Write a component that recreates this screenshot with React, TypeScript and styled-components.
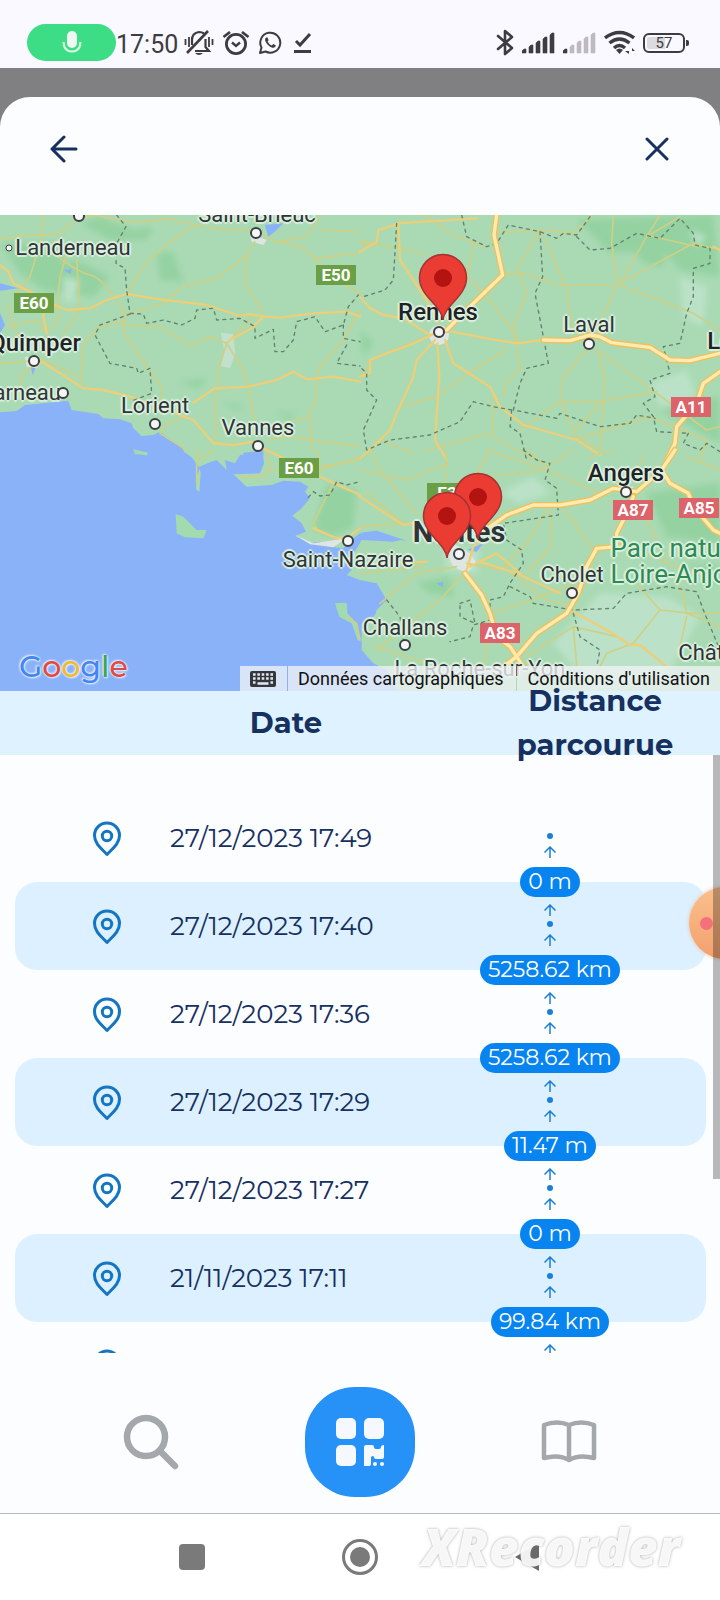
import React from "react";
import styled, { createGlobalStyle, css } from "styled-components";

const GlobalStyle = createGlobalStyle`
  *, *::before, *::after { box-sizing: border-box; }
  body { margin: 0; background: #fcfdff; }
  button { font: inherit; border: 0; padding: 0; background: none; cursor: pointer; }
  svg { display: block; }
`;

const navy = "#16305f";
const blue = "#0784f0";
const pale = "#dcf0ff";
const brandFont = `Montserrat, Inter, sans-serif`;
const systemFont = `Roboto, sans-serif`;

/* ---------- page frame ---------- */

const Page = styled.div`
  display: flex;
  flex-direction: column;
  min-height: 100vh;
  background: #808082;
  overflow: hidden;
`;

const StatusBar = styled.header`
  display: flex;
  align-items: flex-end;
  justify-content: space-between;
  height: 68px;
  padding: 0 31px 7px 27px;
  background: #faf9ff;
  color: #3d3c42;
  font-family: ${systemFont};
`;

const StatusGroup = styled.div<{ $gap: number }>`
  display: flex;
  align-items: center;
  height: 37px;
  gap: ${(p) => p.$gap}px;
`;

const MicPill = styled.span`
  display: flex;
  align-items: center;
  justify-content: center;
  width: 89px;
  height: 37px;
  border-radius: 19px;
  background: #3ddd86;
`;

const Clock = styled.time`
  margin: 4px 6px 0 0;
  font-size: 25px;
  line-height: 30px;
`;

const Battery = styled.span`
  position: relative;
  display: flex;
  align-items: center;
  justify-content: center;
  width: 42px;
  height: 20px;
  margin-right: 4px;
  border: 2px solid #3d3c42;
  border-radius: 6px;
  background: linear-gradient(90deg, #dcdbe0 52%, transparent 52%);
  background-clip: content-box;
  padding: 2px;
  font-size: 15px;
  line-height: 16px;

  &::after {
    content: "";
    position: absolute;
    right: -6px;
    top: 5px;
    width: 3px;
    height: 6px;
    border-radius: 0 2px 2px 0;
    background: #3d3c42;
  }
`;

const Sheet = styled.main`
  display: flex;
  flex-direction: column;
  flex: 1;
  margin-top: 29px;
  border-radius: 30px 30px 0 0;
  background: #fcfdff;
  overflow: hidden;
`;

const SheetHeader = styled.div`
  display: flex;
  align-items: center;
  justify-content: space-between;
  height: 118px;
  padding: 0 43px 14px 44px;
`;

const IconButton = styled.button`
  display: flex;
  align-items: center;
  justify-content: center;
  width: 40px;
  height: 40px;
  color: ${navy};
`;

/* ---------- map ---------- */

const MapFrame = styled.section`
  position: relative;
  aspect-ratio: 720 / 476;
  overflow: hidden;
  font-family: ${systemFont};
`;

const Terrain = styled.svg`
  width: 100%;
  height: 100%;
`;

type Spot = { $x: number; $y: number };

const spot = css<Spot>`
  position: absolute;
  left: ${(p) => (p.$x / 720) * 100}%;
  top: ${(p) => (p.$y / 476) * 100}%;
`;

const Place = styled.span<Spot & { $kind?: "city" | "park" }>`
  ${spot}
  transform: translate(-50%, -50%);
  font-size: 22px;
  line-height: 26px;
  white-space: nowrap;
  text-align: left;
  color: #2f3437;
  text-shadow: 0 0 2px #e6f5e6, 2px 0 1px #dcf0df, -2px 0 1px #dcf0df,
    0 2px 1px #dcf0df, 0 -2px 1px #dcf0df;
  ${(p) =>
    p.$kind === "city" &&
    css`
      font-size: 24px;
      font-weight: 500;
      color: #1f2326;
    `}
  ${(p) =>
    p.$kind === "park" &&
    css`
      font-size: 26px;
      color: #2d8a55;
    `}
`;

const BigPlace = styled(Place)`
  font-size: 29px;
  font-weight: 700;
`;

const Shield = styled.span<Spot & { $red?: boolean }>`
  ${spot}
  transform: translate(-50%, -50%);
  width: 40px;
  height: 20px;
  background: ${(p) => (p.$red ? "#dd636b" : "#6b9f45")};
  color: #fff;
  font-size: 17px;
  font-weight: 700;
  line-height: 20px;
  text-align: center;
`;

const TownDot = styled.i<Spot & { $small?: boolean }>`
  ${spot}
  transform: translate(-50%, -50%);
  width: ${(p) => (p.$small ? 7 : 12)}px;
  height: ${(p) => (p.$small ? 7 : 12)}px;
  border: ${(p) => (p.$small ? 1 : 2)}px solid #3a3f42;
  border-radius: 50%;
  background: #f6f6f6;
`;

const Marker = styled.svg<Spot>`
  ${spot}
  transform: translate(-50%, -100%);
  width: 50px;
  height: 70px;
`;

const GoogleLink = styled.a`
  position: absolute;
  left: 19px;
  bottom: 4px;
  font-family: Montserrat, sans-serif;
  font-size: 30px;
  font-weight: 500;
  line-height: 40px;
  text-decoration: none;
  text-shadow: 0 0 2px #fff, 1px 1px 2px #dfe9fb, -1px -1px 2px #dfe9fb;
`;

const Letter = styled.span<{ $color: string }>`
  color: ${(p) => p.$color};
`;

const MapFooter = styled.div`
  position: absolute;
  right: 0;
  bottom: 0;
  display: flex;
  gap: 1px;
  height: 25px;
  color: #111;
  font-size: 18px;
  line-height: 25px;
`;

const footerItem = css`
  display: flex;
  align-items: center;
  height: 25px;
  background: rgba(240, 242, 245, 0.78);
  color: inherit;
  white-space: nowrap;
`;

const KeyboardButton = styled.button`
  ${footerItem}
  justify-content: center;
  width: 47px;
`;

const FooterButton = styled.button`
  ${footerItem}
  padding: 0 12px 0 10px;
`;

const FooterLink = styled.a`
  ${footerItem}
  padding: 0 10px 0 11px;
  text-decoration: none;
`;

/* ---------- history table ---------- */

const HistoryArea = styled.section`
  position: relative;
  flex: 1 1 0;
  min-height: 400px;
  display: flex;
  flex-direction: column;
  color: ${navy};
  font-family: ${brandFont};
`;

const History = styled.table`
  display: flex;
  flex-direction: column;
  flex: 1 1 0;
  min-height: 0;
`;

const HistoryHead = styled.thead`
  display: block;
  background: #dff2ff;
`;

const HeadRow = styled.tr`
  display: grid;
  grid-template-columns: 102px 1fr 250px;
  grid-template-rows: 64px;
  align-items: center;
`;

const HeadCell = styled.th`
  position: relative;
  z-index: 1;
  padding: 0;
  font-size: 29px;
  font-weight: 700;
  line-height: 44px;
  text-align: center;
`;

const HistoryBody = styled.tbody`
  display: block;
  flex: 1 1 0;
  min-height: 0;
  padding: 39px 14px 0 15px;
  overflow-y: auto;
  scrollbar-width: none;
`;

const Row = styled.tr`
  display: grid;
  grid-template-columns: 155px 1fr 312px;
  grid-template-rows: 88px;
  border-radius: 22px;

  &:nth-child(even) {
    background: ${pale};
  }
`;

const PinCell = styled.td`
  padding: 26px 0 0 77px;
`;

const DateCell = styled.td`
  align-self: center;
  padding: 0;
  font-size: 26px;
  line-height: 30px;
  white-space: nowrap;
`;

const TrackCell = styled.td`
  position: relative;
  z-index: 1;
  display: flex;
  flex-direction: column;
  align-items: center;
  padding: 22px 0 0;
  color: #1a7fd6;
`;

const TrackArrow = styled.svg<{ $hidden?: boolean }>`
  flex: none;
  width: 12px;
  height: 12px;
  visibility: ${(p) => (p.$hidden ? "hidden" : "visible")};
`;

const TrackDot = styled.i`
  flex: none;
  width: 6px;
  height: 6px;
  margin: 5px 0 7px;
  border-radius: 50%;
  background: currentColor;
`;

const Distance = styled.span`
  flex: none;
  height: 30px;
  margin-top: 9px;
  padding: 0 8px;
  border-radius: 15px;
  background: ${blue};
  color: #fff;
  font-size: 22px;
  line-height: 30px;
  white-space: nowrap;
`;

const ScrollThumb = styled.div`
  position: absolute;
  z-index: 3;
  top: 64px;
  right: 0;
  width: 7px;
  height: 64%;
  background: rgba(0, 0, 0, 0.27);
`;

const RecorderBubble = styled.button`
  position: absolute;
  z-index: 2;
  top: 196px;
  right: -41px;
  width: 72px;
  height: 72px;
  border-radius: 50%;
  background: linear-gradient(180deg, #fac08c, #f2a06e);
  box-shadow: 0 0 4px #ecc4a8;

  &::after {
    content: "";
    position: absolute;
    left: 11px;
    top: 30px;
    width: 13px;
    height: 13px;
    border-radius: 50%;
    background: #f4707a;
  }
`;

/* ---------- bottom bars ---------- */

const TabBar = styled.nav`
  display: grid;
  grid-template-columns: repeat(3, 1fr);
  place-items: center;
  height: 160px;
  padding: 34px 46px 16px;
  background: #fcfdff;
`;

const TabButton = styled.button`
  display: flex;
  align-items: center;
  justify-content: center;
  width: 64px;
  height: 64px;
  color: #a4a8ab;
`;

const ScanButton = styled(TabButton)`
  width: 110px;
  height: 110px;
  border-radius: 50px;
  background: #2692f8;
`;

const SystemNav = styled.nav`
  position: relative;
  display: grid;
  grid-template-columns: repeat(3, 1fr);
  place-items: center;
  height: 87px;
  padding: 0 108px;
  border-top: 1px solid #b6bbc2;
  background: #fff;
`;

const Watermark = styled.span`
  position: absolute;
  right: 40px;
  top: 0;
  color: rgba(255, 255, 255, 0.9);
  font-family: "Open Sans", sans-serif;
  font-size: 51px;
  font-style: italic;
  font-weight: 800;
  line-height: 64px;
  text-shadow: 0 0 3px rgba(110, 110, 110, 0.6);
  pointer-events: none;
`;

/* ---------- data ---------- */

const readings = [
  { date: "27/12/2023 17:49", distance: "0 m" },
  { date: "27/12/2023 17:40", distance: "5258.62 km" },
  { date: "27/12/2023 17:36", distance: "5258.62 km" },
  { date: "27/12/2023 17:29", distance: "11.47 m" },
  { date: "27/12/2023 17:27", distance: "0 m" },
  { date: "21/11/2023 17:11", distance: "99.84 km" },
  { date: "", distance: "" },
];

/* Each tile is 1080 units wide; the second row of tiles starts at 720. */
const tiles = [
  {
    x: 0,
    y: 0,
    minor: [
      "M0 90 Q80 70 130 75 T235 25 L290 15 M290 15 Q400 50 500 25 L585 45 L660 58 L760 60 L830 95 Q900 100 940 140 L1000 205 L1080 250",
      "M585 45 Q470 120 440 160 T380 250",
      "M130 0 L125 80 L90 200 L40 260 M200 130 L180 200 L170 300 M230 150 L240 300 L190 370",
      "M160 130 Q240 190 270 195 T350 270 L380 320",
      "M765 95 L740 135 L735 220 L785 300 L790 320 M740 135 L650 205 L550 230 L480 285 L370 315",
      "M940 145 L1080 130 M835 95 L920 80 L960 20 M960 60 L1080 65",
      "M380 330 L300 350 L250 400 M365 315 L370 365 L420 440 L485 530 L480 580",
      "M370 345 L480 350 L570 408 L630 380 L680 400 L760 320",
      "M680 400 L655 480 L645 600 L650 700 M680 400 L730 480 L765 630",
      "M0 460 L130 450 L235 500 M130 450 L65 490 L55 560 M150 360 L180 320 L160 280",
      "M1080 300 L1030 390 L960 470 L950 510 L945 580 L920 620 L830 650",
      "M800 690 L860 680 L1080 710 M930 620 L935 720",
      "M20 350 L110 330 L140 370 M20 280 L60 400 M250 400 L240 530",
      "M500 640 L480 670 L560 720 M560 620 L500 640",
    ],
    main: [
      "M0 165 L25 185 L40 220 L130 265 L130 320 L140 370",
      "M165 285 L200 300 L270 295 L320 270 L380 252 L480 268 L620 285 L720 318 L750 312 L790 320 L840 323 L940 310 L1040 305 L1080 320",
      "M125 455 L250 535 L310 540 L390 560 L500 600 L580 630 L640 700 L700 705 L760 695",
      "M580 578 L645 535 L745 530 L830 510 L880 485 L920 508 L1000 500 L1080 515",
      "M790 320 L755 355 L690 390",
    ],
    motorway: [] as string[],
    border: [
      "M350 15 L378 50 L350 100 L348 160 L375 175 L380 240 L390 310 L430 312 L440 340 L490 330 L545 345 L585 325 L590 300 L640 295 L650 330 L720 325 L765 350 L765 385 L820 358 L825 425 L850 425 L880 390 L890 335 L945 320 L975 365 L1030 345 L1045 290 L1075 255",
      "M390 312 L300 345 L285 375 L330 460 L410 475 L415 490 L450 475 L455 550 L390 575",
      "M1030 345 L1030 385 L1080 395 M1040 405 L1010 460 L1080 468",
    ],
  },
  {
    x: 1080,
    y: 0,
    minor: [
      "M0 100 L50 110 M190 15 L290 80 L380 110 M0 90 L190 130 M340 100 L320 200 L380 260 L450 350 L480 400",
      "M430 190 L490 190 L600 225 L780 225 L1000 310 L1080 360",
      "M640 375 L620 240 L570 120 L540 60 L400 70 M540 60 L470 180 L500 250 L460 350 L480 480 L440 510 L430 560",
      "M780 220 L860 80 L900 15 M780 220 L1000 100 L1060 115 M860 80 L960 20",
      "M700 15 L640 70 L540 60 M770 220 L755 100 L760 15 M860 75 L1010 110",
      "M700 375 L770 230 M685 415 L610 500 L600 575 L480 660",
      "M710 415 L735 500 L720 720 M720 425 L890 550 L1040 660 L1080 650",
      "M600 575 L720 575 L890 545 M605 580 L650 680 L720 720 M720 580 L640 670",
      "M325 490 L230 560 L120 590 M325 490 L440 420 M400 560 L400 680 M390 670 L200 720 M400 680 L520 750",
      "M0 500 L50 440 L200 380 M60 690 L160 730",
      "M640 690 L870 620 L1040 690 L1020 750",
    ],
    main: [
      "M110 40 L350 25 M120 40 L55 60 L50 95 L0 125 M115 40 L120 150 L200 270 L235 340",
      "M0 260 L30 295 L70 315 L130 325 L210 375",
      "M0 500 L30 490 L30 450 L80 430 L150 405 L225 370",
      "M225 390 L170 450 L160 500 L110 610 L90 660 L40 710 L0 745",
      "M232 400 L238 500 L225 690 L260 750",
      "M255 390 L280 460 L390 530 L420 590 L490 645 L650 690 L720 735",
      "M275 365 L380 385 L470 400 L550 390",
      "M1080 120 L1060 110",
    ],
    motorway: [
      "M410 15 L402 75 L428 195 L330 290 L260 360",
      "M550 390 L630 392 L690 375 L720 380 L755 398 L870 412 L930 450 L990 452 L1080 430",
      "M1080 485 L1030 520 L1010 580 L950 650 L945 700 L920 750",
    ],
    border: [
      "M110 40 L100 210 L75 240 L10 260 M305 15 L320 80 L380 110 L410 100 L445 45 L540 65 L590 85 L610 70 L650 75 L690 20 M650 80 L690 120 L750 115 L830 70 L900 85 L960 25 L1000 70 L1005 105 L1050 115 L1050 160 L1000 175 L1000 260 L980 310 L960 400 L910 410 L930 490 L870 510 L885 560 L850 580 L880 620 L890 665 L985 670",
      "M540 65 L548 200 L525 250 L550 380 L565 460 L500 475 L480 520 L460 600 L590 625 L600 610 L720 650 L810 640 L830 615 L885 625",
      "M455 600 L400 590 L340 575 L300 635 L210 675 L90 690 L20 720 L10 660 L50 570 L20 540 L20 490 L0 470 M455 600 L450 650 L480 670 L500 750 M985 670 L970 700 L1020 720 L1040 700 L1080 725",
    ],
  },
  {
    x: 0,
    y: 720,
    minor: [
      "M595 0 L590 30 L590 100 M600 30 L640 0 M720 80 L790 80 L810 50 L800 0 M950 0 L960 60 M1000 100 L940 220 L960 250",
      "M960 60 L1080 20 M960 50 L1080 30 M800 60 L900 60",
      "M1040 500 L1070 520 L1080 570",
    ],
    main: ["M760 -20 L840 20 L960 80 L1080 135", "M940 235 L1010 265 L1045 260 L1080 235"],
    motorway: [] as string[],
    border: ["M925 142 L940 125 L960 138 L990 135 L1010 95 L1040 105 L1080 95"],
  },
  {
    x: 1080,
    y: 720,
    minor: [
      "M30 0 L60 60 L170 190 M260 0 L255 100 M390 0 L350 70 M500 0 L560 50 L640 0 M560 60 L300 90",
      "M0 60 L140 90 L190 70 L260 40 M20 130 L130 220 L0 230",
      "M0 370 L100 360 L190 350 M60 460 L170 370 L290 350 M50 590 L200 640 M50 600 L150 520 L250 440 L300 380",
      "M380 0 L560 60 L720 130 M600 160 L700 300 L650 390 M570 170 L575 290 L500 370",
      "M400 490 L570 430 L650 400 M400 490 L370 650 M430 350 L560 450 L640 470",
      "M560 180 L500 280 L420 360 L320 340 M860 210 L920 330 M780 280 L1000 370 L1080 380",
      "M640 470 L700 350 M820 390 L900 480 L990 490 L1080 490 M900 480 L820 580 M980 500 L960 590",
      "M500 620 L640 530 L770 560 M640 530 L650 650 M980 20 L1080 60 M850 200 L800 130",
      "M690 20 L760 0 M800 110 L850 20 M960 400 L980 490 L1080 530 M700 690 L740 610 L820 580",
    ],
    main: [
      "M0 140 L130 225 L180 215 M330 350 L410 310 L480 370 M360 335 L470 370 L600 430 M0 345 L200 335",
      "M630 480 L750 545 L810 585 L840 585 L920 650",
      "M380 220 L410 215 L380 250 L340 290 L320 360",
    ],
    motorway: [
      "M390 230 L440 195 L520 165 L600 165 L690 150 L760 115 L830 125 M830 125 L905 60 L945 0",
      "M905 60 L930 100 L985 130 L1000 170 L1060 240 L1080 250",
      "M820 140 L790 210 L770 250 L770 290 L710 295 L680 350 L655 430 L620 490 L530 550 L470 620 L430 650",
      "M315 370 L365 435 L390 490 L410 560 L450 590 L490 650",
    ],
    border: [
      "M490 0 L530 30 L570 40 L555 90 L590 115 L595 195 L430 220 L440 270 L485 300 L490 340 L450 400 L430 440 L390 450 L390 510 L340 525 L330 560 L270 575",
      "M450 410 L510 440 L520 460 L640 480 L760 475 L800 430 L920 410 L1010 425 L1030 480 L1080 600 M640 490 L660 560 L720 600 L710 650",
      "M300 460 L330 450 L345 520 L300 500 Z M80 450 L120 500 L130 570",
    ],
  },
];

const places = [
  { name: "Saint-Brieuc", x: 257, y: 0 },
  { name: "Landerneau", x: 73, y: 33 },
  { name: "Quimper", x: 35, y: 128, city: true },
  { name: "Concarneau", x: 2, y: 178 },
  { name: "Lorient", x: 155, y: 191 },
  { name: "Vannes", x: 258, y: 213 },
  { name: "Laval", x: 589, y: 110 },
  { name: "Le Mans", x: 753, y: 126, city: true },
  { name: "Angers", x: 626, y: 258, city: true },
  { name: "Saint-Nazaire", x: 348, y: 345 },
  { name: "Cholet", x: 572, y: 360 },
  { name: "Challans", x: 405, y: 413 },
  { name: "Châtellerault", x: 740, y: 438 },
  { name: "La Roche-sur-Yon", x: 480, y: 454 },
];

const dots = [
  [79, 1],
  [256, 18],
  [34, 146],
  [63, 178],
  [155, 209],
  [258, 231],
  [439, 117],
  [589, 129],
  [626, 277],
  [348, 326],
  [459, 339],
  [572, 378],
  [405, 430],
];

const shields = [
  { name: "E50", x: 336, y: 60 },
  { name: "E60", x: 34, y: 88 },
  { name: "E60", x: 299, y: 253 },
  { name: "E3", x: 447, y: 278 },
  { name: "A11", x: 691, y: 192, red: true },
  { name: "A87", x: 633, y: 295, red: true },
  { name: "A85", x: 699, y: 293, red: true },
  { name: "A83", x: 500, y: 418, red: true },
];

const markers = [
  [443, 107],
  [478, 326],
  [447, 345],
];

const googleLetters: [string, string][] = [
  ["G", "#4285f4"],
  ["o", "#df4b42"],
  ["o", "#edbb30"],
  ["g", "#4285f4"],
  ["l", "#34a853"],
  ["e", "#df4b42"],
];

/* ---------- pieces ---------- */

function Signal({ strength }: { strength: number }) {
  return (
    <svg width="33" height="22" viewBox="0 0 33 22">
      {[5, 9, 13, 17, 21].map((h, i) => (
        <path
          key={h}
          d={`M${i * 7} 21 V${24 - h} L${i * 7 + 2} ${22 - h} H${i * 7 + 4} V21 Z`}
          fill={i < strength ? "#3d3c42" : "#bcbbc1"}
          stroke={i < strength ? "#3d3c42" : "#bcbbc1"}
          strokeWidth="0.600"
        />
      ))}
    </svg>
  );
}

function StatusIcons() {
  return (
    <StatusGroup $gap={8}>
      <svg width="18" height="27" viewBox="0 0 18 27" fill="none" stroke="#3d3c42" strokeWidth="2.6" strokeLinejoin="round" strokeLinecap="round">
        <path d="M2 7 L16 19 L9 25 V2 L16 8 L2 20" />
      </svg>
      <Signal strength={5} />
      <Signal strength={1} />
      <svg width="31" height="25" viewBox="0 0 31 25" fill="none" stroke="#3d3c42" strokeWidth="3.4">
        <path d="M1 8 Q15.500 -3 30 8" />
        <path d="M5.500 13 Q15.500 5 25.500 13" />
        <path d="M10 18 Q15.500 13 21 18" />
        <path d="M12 20 Q15.500 17 19 20 L15.500 24 Z" fill="#3d3c42" stroke="none" />
        <path d="M25 18 V24 L21 21 H25 M28 24 V18 L31 21 H28" stroke="none" fill="#3d3c42" />
      </svg>
      <Battery>57</Battery>
    </StatusGroup>
  );
}

function Bell() {
  return (
    <svg width="30" height="26" viewBox="0 0 30 26" fill="none" stroke="#3d3c42" strokeWidth="2.2">
      <path d="M1.500 9 V15 M5 7 V17 M25 7 V17 M28.500 9 V15" strokeWidth="1.800" />
      <path d="M8 15 V10 Q8 3 15 2 Q18 2 20 3.500 M21.500 9 V17 L25 21 H11" />
      <path d="M3 23 L24 1" strokeWidth="2.600" />
      <path d="M11 23 H19 Q15 27 11 23 Z" fill="#3d3c42" stroke="none" />
    </svg>
  );
}

function Alarm() {
  return (
    <svg width="28" height="26" viewBox="0 0 28 26" fill="none" stroke="#3d3c42" strokeWidth="2.800">
      <circle cx="14" cy="14" r="9.600" />
      <path d="M1.500 7 L8 2 M26.500 7 L20 2" />
      <path d="M10 12.500 L14 16 L18 12.500" strokeWidth="2.400" />
    </svg>
  );
}

function WhatsApp() {
  return (
    <svg width="24" height="24" viewBox="0 0 24 24" fill="none" stroke="#3d3c42" strokeWidth="2">
      <path d="M2 22 L3.500 16.500 A10 10 0 1 1 7.500 20.500 Z" strokeLinejoin="round" />
      <path
        d="M8.200 6.400 C7 7 6.700 8.800 7.700 10.700 C9.300 13.800 11.600 15.900 14.600 16.800 C16.400 17.200 17.800 15.900 17.700 14.300 L15.200 13 L13.900 14.500 C12 13.700 10.500 12.300 9.600 10.400 L10.600 9.200 L9.600 6.500 Z"
        fill="#3d3c42"
        stroke="none"
      />
    </svg>
  );
}

function MapView() {
  return (
    <MapFrame aria-label="Carte">
      <Terrain viewBox="0 15 2160 1428" preserveAspectRatio="xMidYMid slice" aria-hidden="true">
        <defs>
          <filter id="soft" x="-5%" y="-5%" width="110%" height="110%">
            <feGaussianBlur stdDeviation="9" />
          </filter>
        </defs>
        <rect y="0" width="2160" height="1460" fill="#a9dab4" />
        <g fill="#94d2a1" filter="url(#soft)">
          <path d="M60 190 L230 150 L330 200 L280 260 L130 240 Z" />
          <path d="M240 40 L300 20 L400 60 L460 50 L440 90 L330 90 Z" />
          <path d="M470 130 L520 125 L550 215 L480 210 Z" />
          <path d="M530 520 L620 505 L600 535 Z M660 575 L740 590 L710 600 Z M820 605 L890 615 L870 630 Z" />
          <path d="M0 100 L60 190 L180 180 L200 100 Z" />
          <path d="M980 825 L1070 840 L1060 950 L1000 980 L940 960 Z" />
          <path d="M1730 30 L2140 15 L2160 200 L2040 180 L1990 120 L1830 130 Z" />
          <path d="M1900 120 L2000 110 L1990 170 L1930 160 Z" />
          <path d="M1080 360 L1120 400 L1090 440 Z M1980 600 L2160 560 L2160 700 Z" />
          <path d="M1940 850 L2160 820 L2160 1000 L2000 980 Z" />
          <path d="M1250 1120 L1350 1100 L1360 1160 L1290 1150 Z M2060 1060 L2160 1070 L2140 1130 Z" />
        </g>
        <g fill="#bbe2c8" filter="url(#soft)">
          <path d="M1950 520 L2060 480 L2090 560 L1980 590 Z" />
          <path d="M2040 200 L2120 230 L2110 350 L2050 320 Z M2070 60 L2120 80 L2090 110 Z" />
          <path d="M1660 1300 L1800 1150 L2000 1160 L2100 1220 L2000 1400 L1780 1440 Z" />
          <path d="M1500 850 L1600 800 L1650 850 L1560 880 Z" />
          <path d="M1330 1010 L1440 1020 L1430 1090 L1340 1080 Z" />
          <path d="M190 200 L240 210 L220 280 L190 270 Z" />
        </g>
        <g fill="#8ab2f8">
          <path d="M0 607 L50 603 L75 585 L205 572 L215 600 L295 612 L310 625 L360 628 L395 640 L400 655 L425 678 L460 675 L480 665 L515 690 L545 710 L552 725 L575 742 L600 775 L590 800 L588 838 L598 845 L602 790 L598 770 L630 757 L650 750 L680 780 L675 750 L705 760 L720 735 L785 728 L792 760 L780 790 L700 793 L740 830 L815 825 L850 812 L900 815 L925 830 L915 845 L930 865 L905 895 L877 917 L905 940 L918 965 L885 978 L930 1000 L960 995 L990 1010 L1030 1015 L1060 985 L1080 970 L1210 988 L1180 995 L1085 990 L1062 1030 L1055 1080 L1040 1095 L1080 1110 L1130 1120 L1160 1170 L1130 1200 L1125 1215 L1085 1255 L1085 1320 L1120 1360 L1160 1380 L1200 1460 L0 1460 Z" />
          <path d="M0 220 L55 235 L0 242 Z M0 310 L15 345 L0 370 Z M795 45 L850 40 L830 60 L805 80 Z M730 728 L790 722 L790 760 L740 780 Z" />
          <path d="M1080 968 L1130 962 L1220 992 L1130 982 Z M1400 1020 L1450 1000 L1430 1025 Z M1310 1120 L1330 1115 L1328 1132 Z M190 180 L215 178 L212 192 Z M92 470 L108 470 L98 495 Z" />
        </g>
        <g fill="#a3dbb0">
          <path d="M527 912 L550 920 L590 960 L620 960 L610 985 L555 982 L530 970 Z" />
          <path d="M400 718 L445 728 L440 736 L405 732 Z" />
          <path d="M1005 1180 L1040 1178 L1042 1210 L1070 1240 L1082 1290 L1074 1292 L1055 1240 L1018 1220 Z" />
        </g>
        <g fill="#dfe5e2">
          <circle cx="1317" cy="375" r="30" />
          <path d="M1360 1000 L1410 1030 L1430 1060 L1400 1090 L1360 1070 L1340 1030 Z" />
          <path d="M750 70 L800 90 L790 105 L755 95 Z M75 440 L130 450 L110 475 L80 470 Z M885 975 L940 1000 L1040 985 L1000 1012 L930 1003 Z M1860 825 L1900 830 L1895 860 L1860 855 Z" />
        </g>
        <path d="M662 368 L700 372 L706 430 L690 475 L662 468 L672 420 Z" fill="#c3dfcd" />
        {tiles.map((t) => (
          <g
            key={`${t.x}-${t.y}`}
            transform={`translate(${t.x} ${t.y})`}
            fill="none"
            strokeLinejoin="round"
            strokeLinecap="round"
          >
            {t.minor.map((d) => (
              <path key={d} d={d} stroke="#ced085" strokeWidth="5" />
            ))}
            {t.main.map((d) => (
              <path key={d} d={d} stroke="#eccf78" strokeWidth="7" />
            ))}
            {t.border.map((d) => (
              <path key={d} d={d} stroke="#64806c" strokeWidth="4" strokeDasharray="9 13" />
            ))}
            {t.motorway.map((d) => (
              <path key={d} d={d} stroke="#efc05c" strokeWidth="18" />
            ))}
            {t.motorway.map((d) => (
              <path key={`${d}-core`} d={d} stroke="#ffeab0" strokeWidth="10" />
            ))}
          </g>
        ))}
      </Terrain>
      {shields.map((s) => (
        <Shield key={`${s.name}-${s.x}`} $x={s.x} $y={s.y} $red={s.red}>
          {s.name}
        </Shield>
      ))}
      {places.map((p) => (
        <Place key={p.name} $x={p.x} $y={p.y} $kind={p.city ? "city" : undefined}>
          {p.name}
        </Place>
      ))}
      <BigPlace $x={459} $y={317}>
        Nantes
      </BigPlace>
      <Place $x={438} $y={97} $kind="city">
        Rennes
      </Place>
      <Place $x={680} $y={346} $kind="park">
        Parc naturel
        <br />
        Loire-Anjou-
      </Place>
      <TownDot $x={9} $y={33} $small />
      {dots.map(([x, y]) => (
        <TownDot key={`${x}-${y}`} $x={x} $y={y} />
      ))}
      {markers.map(([x, y]) => (
        <Marker key={`${x}-${y}`} $x={x} $y={y} viewBox="0 0 50 70">
          <path
            d="M25 68 C24 54 1.500 44 1.500 26 A23.500 23.500 0 0 1 48.500 26 C48.500 44 26 54 25 68 Z"
            fill="#ea3c33"
            stroke="#a83232"
            strokeWidth="1.500"
          />
          <circle cx="25" cy="26" r="9" fill="#b31412" />
        </Marker>
      ))}
      <GoogleLink href="#google" aria-label="Google">
        {googleLetters.map(([char, color], i) => (
          <Letter key={i} $color={color}>
            {char}
          </Letter>
        ))}
      </GoogleLink>
      <MapFooter>
        <KeyboardButton aria-label="Raccourcis clavier">
          <svg width="26" height="16" viewBox="0 0 26 16">
            <rect width="26" height="16" rx="2" fill="#34383d" />
            <path
              d="M3 3.500 H23 M3 7.500 H23"
              stroke="#e4e8f0"
              strokeWidth="2.400"
              strokeDasharray="2.600 1.750"
            />
            <path d="M3 11.500 H5.500 M7.500 12.500 H18.500 M20.500 11.500 H23" stroke="#e4e8f0" strokeWidth="2.400" />
          </svg>
        </KeyboardButton>
        <FooterButton>Données cartographiques</FooterButton>
        <FooterLink href="#conditions">Conditions d'utilisation</FooterLink>
      </MapFooter>
    </MapFrame>
  );
}

function Arrow({ hidden }: { hidden?: boolean }) {
  return (
    <TrackArrow $hidden={hidden} viewBox="0 0 12 12" fill="none" stroke="currentColor" strokeWidth="1.500">
      <path d="M6 12 V1 M0.500 6.500 L6 1 L11.500 6.500" />
    </TrackArrow>
  );
}

function HistoryRow({ date, distance, first }: { date: string; distance: string; first: boolean }) {
  return (
    <Row>
      <PinCell>
        <svg width="30" height="38" viewBox="0 0 30 38" fill="none" stroke="#1475c4" strokeWidth="3">
          <path d="M15 34.500 C10 29 2.500 24 2.500 15.500 A12.500 12.500 0 0 1 27.500 15.500 C27.500 24 20 29 15 34.500 Z" strokeLinejoin="round" />
          <circle cx="15" cy="16" r="4.700" />
        </svg>
      </PinCell>
      <DateCell>{date}</DateCell>
      <TrackCell>
        <Arrow hidden={first} />
        <TrackDot />
        <Arrow />
        {distance && <Distance>{distance}</Distance>}
      </TrackCell>
    </Row>
  );
}

export default function App() {
  return (
    <Page>
      <GlobalStyle />
      <StatusBar>
        <StatusGroup $gap={0}>
          <MicPill>
            <svg width="20" height="24" viewBox="0 0 20 24">
              <rect x="5" y="0" width="10" height="17" rx="5" fill="#f0f6f2" />
              <path d="M1.500 11 Q2 20.500 10 20.500 T18.500 11" fill="none" stroke="#d8f6e4" strokeWidth="2.200" />
            </svg>
          </MicPill>
          <Clock>17:50</Clock>
          <StatusGroup $gap={8}>
            <Bell />
            <Alarm />
            <WhatsApp />
            <svg width="24" height="22" viewBox="0 0 24 22" fill="none" stroke="#3d3c42">
              <path d="M6 9 L10 13 L20 2" strokeWidth="3" />
              <path d="M4 19.500 H21" strokeWidth="3" />
            </svg>
          </StatusGroup>
        </StatusGroup>
        <StatusIcons />
      </StatusBar>

      <Sheet>
        <SheetHeader>
          <IconButton aria-label="Retour">
            <svg width="28" height="28" viewBox="0 0 28 28" fill="none" stroke="currentColor" strokeWidth="3" strokeLinecap="round" strokeLinejoin="round">
              <path d="M26 14 H2 M14 2 L2 14 L14 26" />
            </svg>
          </IconButton>
          <IconButton aria-label="Fermer">
            <svg width="24" height="24" viewBox="0 0 24 24" fill="none" stroke="currentColor" strokeWidth="3" strokeLinecap="round">
              <path d="M2 2 L22 22 M22 2 L2 22" />
            </svg>
          </IconButton>
        </SheetHeader>

        <MapView />

        <HistoryArea>
          <History>
            <HistoryHead>
              <HeadRow>
                <HeadCell aria-label="Position" />
                <HeadCell scope="col">Date</HeadCell>
                <HeadCell scope="col">
                  Distance
                  <br />
                  parcourue
                </HeadCell>
              </HeadRow>
            </HistoryHead>
            <HistoryBody>
              {readings.map((r, i) => (
                <HistoryRow key={i} date={r.date} distance={r.distance} first={i === 0} />
              ))}
            </HistoryBody>
          </History>
          <ScrollThumb />
          <RecorderBubble aria-label="Enregistreur" />
        </HistoryArea>

        <TabBar>
          <TabButton aria-label="Rechercher">
            <svg width="56" height="56" viewBox="0 0 56 56" fill="none" stroke="currentColor" strokeLinecap="round">
              <circle cx="23" cy="23" r="19" strokeWidth="6.500" />
              <path d="M37 37 L52 52" strokeWidth="6.500" />
            </svg>
          </TabButton>
          <ScanButton aria-label="Scanner">
            <svg width="48" height="50" viewBox="0 0 48 50" fill="#f5f8ff">
              <rect x="0" y="1" width="20" height="21" rx="5" />
              <rect x="28" y="1" width="20" height="21" rx="5" />
              <rect x="0" y="28" width="20" height="21" rx="5" />
              <path d="M28 30 Q28 28 30 28 H36 Q38 28 38 30 Q38 32 41 32 H43 Q45 32 45 30 Q45 28 48 28 V40 Q48 42 46 42 H40 Q38 42 38 40 Q37 38 35 40 V47 Q35 49 33 49 H28 Z" />
              <circle cx="39" cy="47" r="2" />
              <circle cx="46" cy="47" r="2" />
            </svg>
          </ScanButton>
          <TabButton aria-label="Carnet">
            <svg width="56" height="44" viewBox="0 0 56 44" fill="none" stroke="currentColor" strokeWidth="4.500" strokeLinejoin="round">
              <path d="M28 5 Q16 0 3 5 V38 Q18 34 28 40 Q38 34 53 38 V5 Q40 0 28 5 V40" />
            </svg>
          </TabButton>
        </TabBar>
      </Sheet>

      <SystemNav>
        <IconButton aria-label="Applications récentes">
          <svg width="26" height="26" viewBox="0 0 26 26">
            <rect width="26" height="26" rx="4" fill="#7a7a7a" />
          </svg>
        </IconButton>
        <IconButton aria-label="Accueil">
          <svg width="36" height="36" viewBox="0 0 36 36">
            <circle cx="18" cy="18" r="16.500" fill="none" stroke="#7a7a7a" strokeWidth="3" />
            <circle cx="18" cy="18" r="10" fill="#7a7a7a" />
          </svg>
        </IconButton>
        <IconButton aria-label="Précédent">
          <svg width="26" height="28" viewBox="0 0 26 28">
            <path d="M0 14 L24 0 V28 Z" fill="#6a6a6a" />
          </svg>
        </IconButton>
        <Watermark aria-hidden="true">XRecorder</Watermark>
      </SystemNav>
    </Page>
  );
}
